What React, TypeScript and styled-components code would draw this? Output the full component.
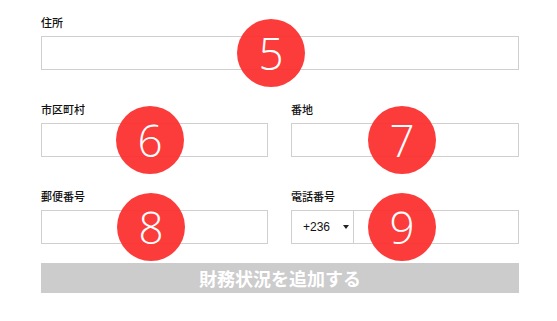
import styled, { createGlobalStyle } from "styled-components";

const GlobalStyle = createGlobalStyle`
    html, body {
        margin: 0;
        padding: 0;
        background: #ffffff;
    }
    body {
        font-family: "Noto Sans CJK JP", "Noto Sans", sans-serif;
    }
`;

const StyledForm = styled.div`
    width: 478px;
    padding: 14px 0 0 41px;
    display: flex;
    flex-direction: column;
    gap: 31px;
`;

const StyledRow = styled.div`
    display: grid;
    grid-template-columns: 227px 228px;
    column-gap: 23px;
`;

const StyledField = styled.div`
    position: relative;
    display: flex;
    flex-direction: column;
`;

const StyledLabel = styled.label`
    height: 16px;
    line-height: 16px;
    margin-bottom: 6px;
    font-size: 11px;
    font-weight: 500;
    color: #111111;
`;

const StyledInput = styled.div`
    box-sizing: border-box;
    height: 34px;
    border: 1px solid #cfcfcf;
    background: #ffffff;
    display: flex;
`;

const StyledCountry = styled.div`
    width: 62px;
    border-right: 1px solid #cfcfcf;
    display: flex;
    align-items: center;
    padding-left: 11px;
    box-sizing: border-box;
    font-family: "Liberation Sans", Arial, sans-serif;
    font-size: 12px;
    color: #111111;
`;

const StyledCaret = styled.span`
    margin-left: 13px;
    width: 0;
    height: 0;
    border-left: 3px solid transparent;
    border-right: 3px solid transparent;
    border-top: 4px solid #222222;
`;

const StyledButton = styled.button`
    margin-top: -12px;
    height: 30px;
    border: none;
    background: #cccccc;
    color: #ffffff;
    font-family: "Noto Sans CJK JP", sans-serif;
    font-size: 18px;
    font-weight: 700;
    padding: 0;
    line-height: 30px;
`;

const StyledBadge = styled.div<{ left: number }>`
    position: absolute;
    left: ${props => props.left}px;
    top: 5px;
    width: 68px;
    height: 68px;
    border-radius: 50%;
    background: rgba(252, 44, 44, 0.93);
    color: #ffffff;
    font-family: "Open Sans", sans-serif;
    font-size: 44px;
    font-weight: 300;
    display: flex;
    align-items: center;
    justify-content: center;
    line-height: 1;
`;

interface FieldProps {
    label: string;
    badge: number;
    badgeLeft: number;
    phone?: boolean;
}

function Field({ label, badge, badgeLeft, phone }: FieldProps) {
    return (
        <StyledField>
            <StyledLabel>{label}</StyledLabel>
            <StyledInput>
                {phone && (
                    <StyledCountry>
                        +236
                        <StyledCaret />
                    </StyledCountry>
                )}
            </StyledInput>
            <StyledBadge left={badgeLeft}>{badge}</StyledBadge>
        </StyledField>
    );
}

export default function App() {
    return (
        <>
            <GlobalStyle />
            <StyledForm>
                <Field label="住所" badge={5} badgeLeft={196} />
                <StyledRow>
                    <Field label="市区町村" badge={6} badgeLeft={75} />
                    <Field label="番地" badge={7} badgeLeft={77} />
                </StyledRow>
                <StyledRow>
                    <Field label="郵便番号" badge={8} badgeLeft={76} />
                    <Field label="電話番号" badge={9} badgeLeft={77} phone />
                </StyledRow>
                <StyledButton>財務状況を追加する</StyledButton>
            </StyledForm>
        </>
    );
}
